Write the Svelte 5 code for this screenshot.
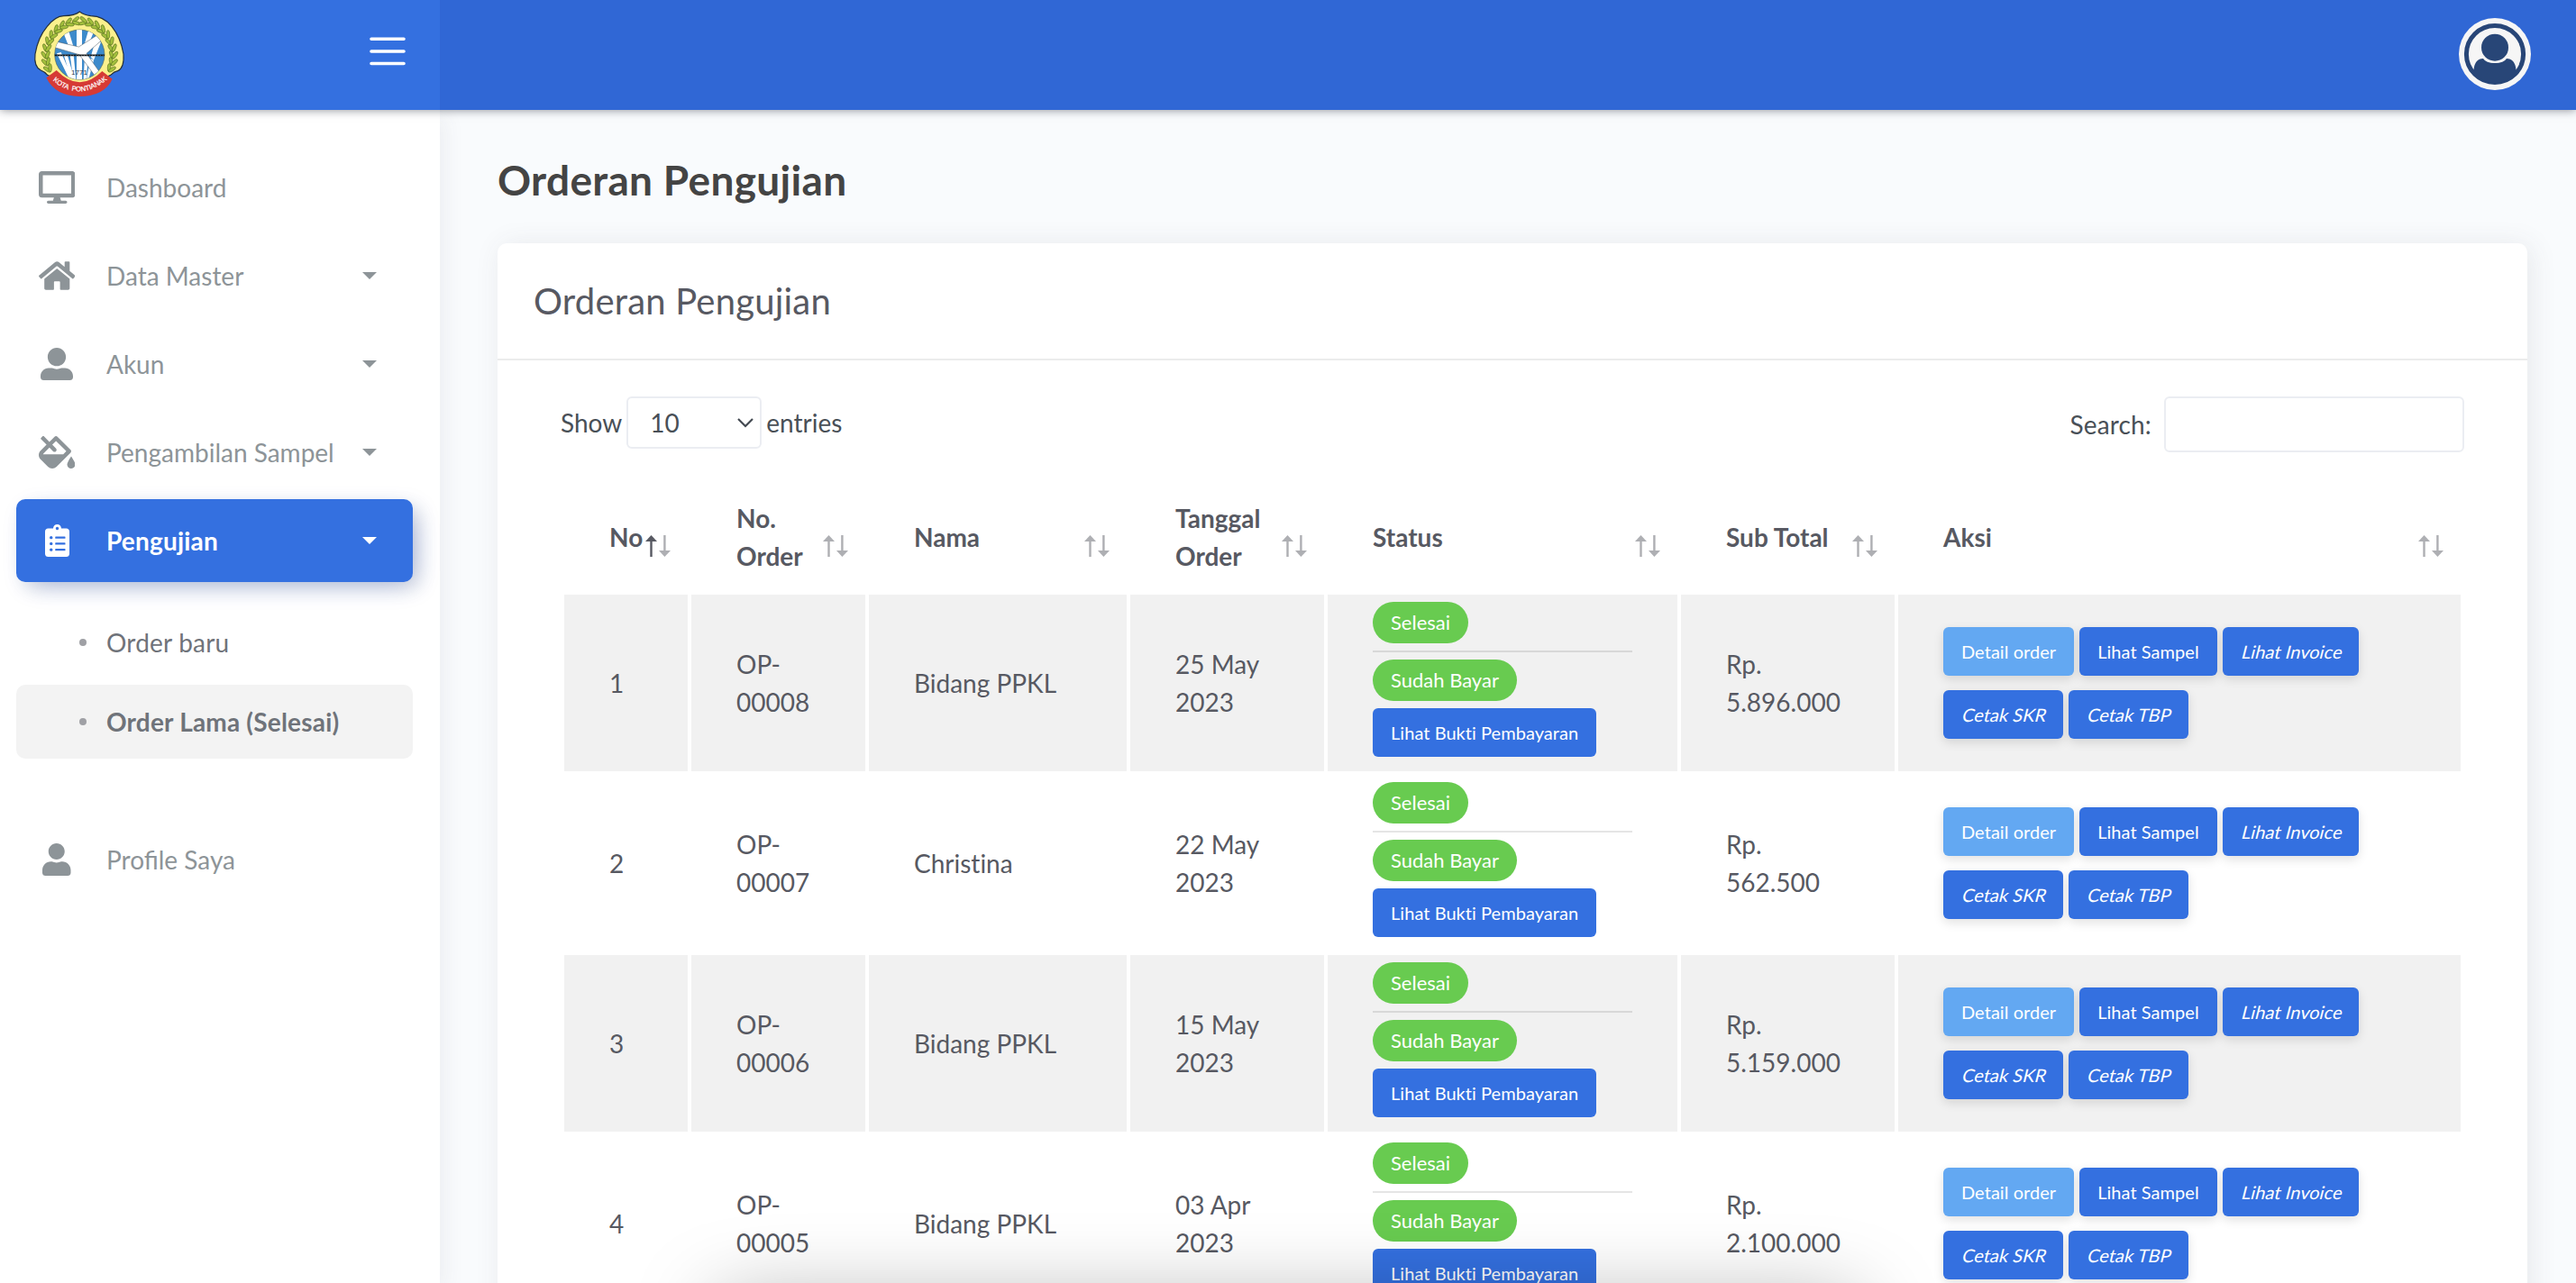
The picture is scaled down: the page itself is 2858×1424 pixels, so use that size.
<script>
  const icons = {
    desktop: { w: 576, d: 'M528 0H48C21.500 0 0 21.500 0 48v320c0 26.500 21.500 48 48 48h192l-16 48h-72c-13.300 0-24 10.700-24 24s10.700 24 24 24h272c13.300 0 24-10.700 24-24s-10.700-24-24-24h-72l-16-48h192c26.500 0 48-21.500 48-48V48c0-26.500-21.500-48-48-48zm-16 352H64V64h448v288z' },
    home: { w: 576, d: 'M488 312.700V456c0 13.300-10.700 24-24 24H348c-6.600 0-12-5.400-12-12V356c0-6.600-5.400-12-12-12h-72c-6.600 0-12 5.400-12 12v112c0 6.600-5.400 12-12 12H112c-13.300 0-24-10.700-24-24V312.700c0-3.600 1.600-7 4.400-9.300l188-154.800c4.400-3.600 10.800-3.600 15.300 0l188 154.800c2.700 2.300 4.300 5.700 4.300 9.300zm83.600-60.900L488 182.900V44.400c0-6.600-5.400-12-12-12h-56c-6.600 0-12 5.400-12 12V117l-89.500-73.700c-17.700-14.600-43.300-14.600-61 0L4.400 251.800c-5.100 4.200-5.800 11.800-1.600 16.900l25.500 31c4.200 5.100 11.800 5.800 16.900 1.600l235.200-193.700c4.400-3.600 10.800-3.600 15.300 0l235.200 193.700c5.100 4.200 12.700 3.500 16.900-1.600l25.500-31c4.200-5.200 3.400-12.700-1.700-16.900z' },
    userAlt: { w: 512, d: 'M256 288c79.500 0 144-64.500 144-144S335.500 0 256 0 112 64.500 112 144s64.500 144 144 144zm128 32h-55.100c-22.200 10.200-46.900 16-72.900 16s-50.600-5.800-72.900-16H128C57.300 320 0 377.300 0 448v16c0 26.500 21.500 48 48 48h416c26.500 0 48-21.500 48-48v-16c0-70.700-57.300-128-128-128z' },
    user: { w: 448, d: 'M224 256c70.700 0 128-57.300 128-128S294.700 0 224 0 96 57.300 96 128s57.300 128 128 128zm89.600 32h-16.700c-22.200 10.200-46.900 16-72.900 16s-50.600-5.800-72.900-16h-16.700C60.200 288 0 348.200 0 422.400V464c0 26.500 21.500 48 48 48h352c26.500 0 48-21.500 48-48v-41.600c0-74.200-60.200-134.400-134.400-134.400z' },
    fillDrip: { w: 576, d: 'M512 320s-64 92.650-64 128c0 35.350 28.660 64 64 64s64-28.650 64-64-64-128-64-128zm-9.370-102.940L294.940 9.370C288.690 3.120 280.500 0 272.310 0s-16.380 3.120-22.620 9.370l-81.580 81.580L81.930 4.760c-6.250-6.250-16.380-6.250-22.620 0L36.690 27.380c-6.240 6.250-6.240 16.380 0 22.620l86.190 86.180-94.760 94.760c-37.490 37.480-37.490 98.260 0 135.750l117.190 117.190c18.740 18.740 43.310 28.120 67.870 28.120 24.570 0 49.130-9.370 67.870-28.120l221.570-221.570c12.500-12.500 12.500-32.750.01-45.250zm-116.220 70.970H65.930c1.360-3.840 3.570-7.980 7.430-11.830l13.150-13.150 81.610-81.610 58.600 58.600c12.490 12.490 32.750 12.490 45.240 0s12.490-32.750 0-45.240l-58.600-58.600 58.950-58.950 162.440 162.440-48.340 48.340z' },
    clipboard: { w: 384, d: 'M336 64h-80c0-35.300-28.700-64-64-64s-64 28.700-64 64H48C21.500 64 0 85.500 0 112v352c0 26.500 21.500 48 48 48h288c26.500 0 48-21.500 48-48V112c0-26.500-21.500-48-48-48zM96 424c-13.300 0-24-10.700-24-24s10.700-24 24-24 24 10.700 24 24-10.700 24-24 24zm0-96c-13.300 0-24-10.700-24-24s10.700-24 24-24 24 10.700 24 24-10.700 24-24 24zm0-96c-13.300 0-24-10.700-24-24s10.700-24 24-24 24 10.700 24 24-10.700 24-24 24zm96-192c13.300 0 24 10.700 24 24s-10.700 24-24 24-24-10.700-24-24 10.700-24 24-24zm128 368c0 4.400-3.600 8-8 8H168c-4.400 0-8-3.600-8-8v-16c0-4.400 3.600-8 8-8h144c4.400 0 8 3.600 8 8v16zm0-96c0 4.400-3.600 8-8 8H168c-4.400 0-8-3.600-8-8v-16c0-4.400 3.600-8 8-8h144c4.400 0 8 3.600 8 8v16zm0-96c0 4.400-3.600 8-8 8H168c-4.400 0-8-3.600-8-8v-16c0-4.400 3.600-8 8-8h144c4.400 0 8 3.600 8 8v16z' }
  };

  const menu = [
    { label: 'Dashboard', icon: icons.desktop },
    { label: 'Data Master', icon: icons.home, caret: true },
    { label: 'Akun', icon: icons.userAlt, caret: true },
    { label: 'Pengambilan Sampel', icon: icons.fillDrip, caret: true },
    {
      label: 'Pengujian', icon: icons.clipboard, caret: true, active: true,
      children: [{ label: 'Order baru' }, { label: 'Order Lama (Selesai)', current: true }]
    },
    { label: 'Profile Saya', icon: icons.user }
  ];

  const columns = [
    { label: 'No', width: 137, sorted: true },
    { label: 'No. Order', width: 193 },
    { label: 'Nama', width: 286 },
    { label: 'Tanggal Order', width: 215 },
    { label: 'Status', width: 388 },
    { label: 'Sub Total', width: 237 },
    { label: 'Aksi', width: 624 }
  ];

  const rows = [
    { no: 1, order: 'OP-00008', name: 'Bidang PPKL', date: '25 May 2023', total: 'Rp. 5.896.000' },
    { no: 2, order: 'OP-00007', name: 'Christina', date: '22 May 2023', total: 'Rp. 562.500' },
    { no: 3, order: 'OP-00006', name: 'Bidang PPKL', date: '15 May 2023', total: 'Rp. 5.159.000' },
    { no: 4, order: 'OP-00005', name: 'Bidang PPKL', date: '03 Apr 2023', total: 'Rp. 2.100.000' }
  ];

  // Wreath leaves: pairs placed along an arc around the emblem's centre.
  const leaves = [];
  for (const side of [-1, 1]) {
    for (let i = 0; i < 10; i++) {
      const t = (-30 + i * 12) * Math.PI / 180;
      const rx = 113 - i * 0.6, ry = 111;
      const x = 265 + side * rx * Math.cos(t);
      const y = 182 - ry * Math.sin(t);
      const along = side === 1 ? -90 - (t * 180) / Math.PI : -90 + (t * 180) / Math.PI;
      for (const s of [-1, 1]) {
        const a = along + s * 28;
        const r = (a * Math.PI) / 180;
        leaves.push({ x: x + Math.cos(r) * 12, y: y + Math.sin(r) * 12, a });
      }
    }
  }
</script>

<div class="app">
  <header class="topbar">
    <div class="brand">
      <svg class="logo" viewBox="108 30 312 300" aria-label="Kota Pontianak">
        <path d="M265 39Q280 50 302 53Q345 54 372 88Q402 125 411 180Q414 226 392 236Q380 238 368 250L265 300L158 250Q148 238 136 234Q112 222 117 180Q126 125 157 88Q184 54 212 53Q250 52 265 39Z" fill="#fbf08d" stroke="#24303a" stroke-width="3.500" />
        {#each leaves as l}
          <ellipse cx={l.x} cy={l.y} rx="14" ry="5.500" transform="rotate({l.a} {l.x} {l.y})" fill="#a3bf3c" stroke="#4d661d" stroke-width="1.700" />
        {/each}
        <circle cx="265" cy="182" r="89" fill="#fbf08d" />
        <clipPath id="disc"><circle cx="265" cy="182" r="83" /></clipPath>
        <circle cx="265" cy="182" r="83" fill="#3d8acb" stroke="#56685c" stroke-width="2" />
        <g clip-path="url(#disc)">
          <path d="M255 95h18v172h-18zM212 112l17-8 20 66h-14zM294 102l17 6-24 60h-12zM189 178l14-4 38 86h-12zM212 182h12l24 82h-11zM233 182h12l8 84h-9zM318 132l18 8-24 60-10-10zM282 184h12l-7 80h-9zM302 194l10 6-16 60h-8z" fill="#fff" />
          <path d="M182 137L262 156L322 118L336 136L288 178L330 238L314 250L264 182L182 158Z" fill="#fff" stroke="#44535c" stroke-width="1.500" />
          <path d="M180 184H350" stroke="#15191c" stroke-width="5" />
          <path d="M180 184H350" stroke="#8fa2ad" stroke-width="1.500" stroke-dasharray="3 6" />
          <text x="264" y="248" class="year">1771</text>
        </g>
        <path d="M154 259L188 234Q264 312 340 237L374 263Q348 320 264 321Q184 320 154 259Z" fill="#d63a35" />
        <path id="ribbon" d="M172 265Q264 345 360 262" fill="none" />
        <text class="ribbon-text"><textPath href="#ribbon" startOffset="50%">KOTA&#160; PONTIANAK</textPath></text>
      </svg>
      <svg class="burger" viewBox="0 0 40 32"><path d="M2 2.300H38M2 16H38M2 29.500H38" /></svg>
    </div>
    <div class="navbar">
      <svg class="avatar" viewBox="0 0 80 80">
        <clipPath id="face"><circle cx="40" cy="40" r="32" /></clipPath>
        <circle cx="40" cy="40" r="40" fill="#f6f6f6" />
        <circle cx="40" cy="40" r="31.600" fill="none" stroke="#284677" stroke-width="5" />
        <g clip-path="url(#face)" fill="#284677">
          <path d="M14 80L16.500 57Q18 45 27 45Q30 50 40 50T53 45Q62 45 63.500 57L66 80Z" />
        </g>
        <circle cx="40" cy="32.700" r="17" fill="#f6f6f6" />
        <circle cx="40" cy="32.700" r="15" fill="#284677" />
      </svg>
    </div>
  </header>

  <div class="body">
    <aside class="sidebar">
      {#each menu as item}
        <a class="item" class:active={item.active}>
          <span class="icon"><svg viewBox="0 0 {item.icon.w} 512"><path d={item.icon.d} /></svg></span>
          <span class="label">{item.label}</span>
          {#if item.caret}<span class="caret"></span>{/if}
        </a>
        {#if item.children}
          <div class="submenu">
            {#each item.children as child}
              <a class="subitem" class:current={child.current}><span class="dot"></span>{child.label}</a>
            {/each}
          </div>
        {/if}
      {/each}
    </aside>

    <main>
      <h4 class="page-title">Orderan Pengujian</h4>
      <section class="card">
        <div class="card-head">Orderan Pengujian</div>
        <div class="card-body">
          <div class="tools">
            <div class="length">
              <span>Show</span>
              <span class="select">10<svg viewBox="0 0 20 12"><path d="M2 2L10 10L18 2" /></svg></span>
              <span>entries</span>
            </div>
            <label class="search">Search:<input type="text" /></label>
          </div>
          <table>
            <colgroup>
              {#each columns as c}<col style="width: {c.width}px" />{/each}
            </colgroup>
            <thead>
              <tr>
                {#each columns as c}
                  <th>
                    {c.label}
                    <svg class="sort" class:sorted={c.sorted} viewBox="0 0 28 24">
                      <path class="up" d="M6.500 0L13 7H7.700V24H5.300V7H0Z" />
                      <path class="down" d="M21.400 24L28 17H22.600V0H20.200V17H15Z" />
                    </svg>
                  </th>
                {/each}
              </tr>
            </thead>
            <tbody>
              {#each rows as r}
                <tr>
                  <td>{r.no}</td>
                  <td>{r.order}</td>
                  <td>{r.name}</td>
                  <td>{r.date}</td>
                  <td class="status">
                    <div class="stack">
                      <span class="badge">Selesai</span>
                      <span class="rule"></span>
                      <span class="badge">Sudah Bayar</span>
                      <a class="btn">Lihat Bukti Pembayaran</a>
                    </div>
                  </td>
                  <td>{r.total}</td>
                  <td>
                    <div class="actions">
                      <a class="btn raised info">Detail order</a>
                      <a class="btn raised">Lihat Sampel</a>
                      <a class="btn raised"><i>Lihat Invoice</i></a>
                      <a class="btn raised"><i>Cetak SKR</i></a>
                      <a class="btn raised"><i>Cetak TBP</i></a>
                    </div>
                  </td>
                </tr>
              {/each}
            </tbody>
          </table>
        </div>
      </section>
    </main>
  </div>
  <div class="edge-shadow"></div>
</div>

<style>
  :global(body) { overflow: hidden; }
  .app {
    position: relative;
    display: flex;
    flex-direction: column;
    height: 1424px;
    overflow: hidden;
    background: #f9fbfd;
    color: #575962;
    font: 400 28px/42px Lato, sans-serif;
  }
  .app *, .app { box-sizing: border-box; }

  .topbar {
    display: flex;
    flex: none;
    height: 122px;
    position: relative;
    z-index: 2;
    box-shadow: 0 0 10px rgba(18, 23, 39, .5);
  }
  .brand {
    display: flex;
    align-items: flex-start;
    justify-content: space-between;
    width: 488px;
    padding: 10px 38px 0 36px;
    background: #3470e0;
  }
  .logo { width: 104px; height: 100px; }
  .year { font: 400 24px "Liberation Sans", sans-serif; text-anchor: middle; fill: #25343f; }
  .ribbon-text { font: 400 23px "Liberation Sans", sans-serif; text-anchor: middle; fill: #fff; stroke: #fff; stroke-width: .6; letter-spacing: -.4px; }
  .burger { width: 40px; height: 32px; margin-top: 31px; fill: none; stroke: #fff; stroke-width: 3.600; stroke-linecap: round; }
  .navbar {
    display: flex;
    flex: 1;
    justify-content: flex-end;
    padding: 20px 50px 0 0;
    background: #3067d5;
  }
  .avatar { width: 80px; height: 80px; }

  .body { display: flex; flex: 1; min-height: 0; }
  .sidebar {
    display: flex;
    flex-direction: column;
    flex: none;
    gap: 6px;
    width: 488px;
    padding: 40px 30px 0 18px;
    background: #fff;
    box-shadow: 8px 8px 20px rgba(69, 65, 78, .06);
  }
  .item {
    display: flex;
    align-items: center;
    flex: none;
    height: 92px;
    padding: 0 40px 0 16px;
    border-radius: 10px;
    color: #8d9498;
  }
  .icon { display: flex; justify-content: center; width: 58px; margin-right: 26px; }
  .icon svg { height: 36px; fill: currentColor; }
  .label { flex: 1; white-space: nowrap; }
  .caret { border: 8px solid transparent; border-top-color: currentColor; border-bottom: 0; }
  .active {
    background: #3470e0;
    color: #fff;
    font-weight: 700;
    letter-spacing: .2px;
    box-shadow: 8px 8px 20px 0 rgba(0, 0, 0, .1), 8px 8px 30px -10px rgba(21, 70, 200, .4);
  }
  .submenu { display: flex; flex-direction: column; gap: 6px; margin: 20px 0 60px; }
  .subitem {
    display: flex;
    align-items: center;
    height: 82px;
    padding-left: 70px;
    border-radius: 10px;
    color: #6f737a;
    letter-spacing: .2px;
  }
  .current { background: #f3f3f3; font-weight: 700; }
  .dot { width: 8px; height: 8px; margin-right: 22px; border-radius: 50%; background: #9fa0a5; }

  main { flex: 1; min-width: 0; padding: 51px 54px 0 64px; }
  .page-title { margin: 0 0 43px; font-size: 46px; line-height: 54px; font-weight: 700; letter-spacing: .32px; color: #444; }
  .card { height: 1300px; border-radius: 10px; background: #fff; box-shadow: 4px 2px 30px rgba(69, 65, 78, .1); }
  .card-head {
    height: 130px;
    padding: 36px 40px 0;
    border-bottom: 2px solid #ebecec;
    font-size: 40px;
    line-height: 56px;
    letter-spacing: .2px;
  }
  .card-body { padding: 40px 70px 0; }
  .tools { display: flex; justify-content: space-between; color: #495057; }
  .length { display: flex; align-items: center; gap: 5px; height: 58px; }
  .select {
    display: flex;
    align-items: center;
    justify-content: space-between;
    width: 150px;
    height: 58px;
    padding: 0 6px 0 24px;
    border: 2px solid #ebedf2;
    border-radius: 6px;
  }
  .select svg { width: 20px; height: 12px; fill: none; stroke: #444a52; stroke-width: 2.200; }
  .search { display: flex; align-items: center; gap: 14px; letter-spacing: .15px; }
  .search input { width: 333px; height: 62px; border: 2px solid #ebedf2; border-radius: 6px; background: #fff; }

  table {
    width: 2112px;
    margin-top: 32px;
    border-collapse: separate;
    border-spacing: 4px;
    table-layout: fixed;
    font-variant-ligatures: none;
  }
  th { position: relative; height: 118px; padding: 0 50px 2px; text-align: left; font-weight: 700; }
  td { height: 196px; padding: 0 50px; vertical-align: middle; }
  tbody tr:nth-child(odd) td { background: #f1f1f1; }
  .sort { position: absolute; right: 19px; bottom: 38px; width: 28px; height: 24px; fill: #aeafb3; }
  .sorted .up { fill: #575962; }
  td.status { padding: 8px 50px 16px; }
  .stack { display: flex; flex-direction: column; align-items: flex-start; gap: 8px; }
  .badge {
    height: 46px;
    padding: 0 20px;
    border-radius: 23px;
    background: #68cb50;
    color: #fff;
    font-size: 22px;
    line-height: 46px;
  }
  .rule { width: 100%; height: 2px; background: rgba(0, 0, 0, .1); }
  .btn {
    height: 54px;
    padding: 0 20px;
    border-radius: 6px;
    background: #3470e0;
    color: #fff;
    font-size: 20px;
    line-height: 54px;
    letter-spacing: .05px;
    white-space: nowrap;
  }
  /* upright Lato slanted from its baseline */
  .btn i { display: inline-block; font-style: normal; transform: skewX(-14deg); transform-origin: 0 34px; }
  .raised { box-shadow: 0 4px 12px rgba(0, 0, 0, .12); }
  .info { background: #63a8f2; }
  .actions { display: flex; flex-wrap: wrap; gap: 16px 6px; width: 480px; }

  /* soft shade along the bottom edge of the window */
  .edge-shadow {
    position: absolute;
    top: 1446px;
    left: 790px;
    width: 1278px;
    height: 60px;
    z-index: 3;
    border-radius: 40px;
    box-shadow: 0 0 90px rgba(0, 0, 0, .36);
  }
</style>
